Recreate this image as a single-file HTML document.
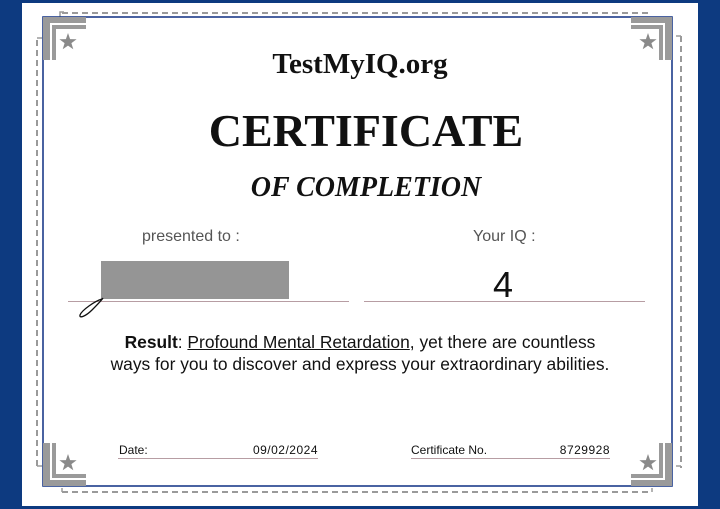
<!DOCTYPE html>
<html><head><meta charset="utf-8"><style>
*{margin:0;padding:0;box-sizing:border-box}
body{width:720px;height:509px;background:#0d3a80;position:relative;overflow:hidden;font-family:"Liberation Sans",sans-serif}
.paper{position:absolute;left:22px;top:3px;width:676px;height:503px;background:#fff}
.a{position:absolute}
.t{position:absolute;white-space:nowrap}
</style></head><body>
<div class="paper"></div>
<svg class="a" style="left:0;top:0" width="720" height="509">
 <g stroke="#9a9a9a" stroke-width="2" stroke-dasharray="6,4" fill="none">
  <line x1="62" y1="13" x2="652" y2="13"/>
  <line x1="62" y1="492" x2="650" y2="492"/>
  <line x1="37" y1="40" x2="37" y2="468"/>
  <line x1="681" y1="36" x2="681" y2="468"/>
 </g>
 <g stroke="#9a9a9a" stroke-width="1.5" fill="none">
  <path d="M60 17 V12 H64"/><path d="M37 38 H42"/><path d="M681 36 H676"/><path d="M37 466 H42"/><path d="M62 492 V488"/><path d="M652 492 V488"/><path d="M681 466 H676"/>
 </g>
 <rect x="43" y="17" width="629" height="469" fill="none" stroke="#1d3c8a" stroke-width="1.6"/>
 <g fill="#9a9a9a">
  <path d="M43 17 H86 V23 H50 V60 H43 Z"/>
  <path d="M52 25 H86 V29 H56 V60 H52 Z"/>
  <path d="M672 17 H631 V23 H665 V60 H672 Z"/>
  <path d="M663 25 H631 V29 H659 V60 H663 Z"/>
  <path d="M43 486 H86 V480 H50 V443 H43 Z"/>
  <path d="M52 478 H86 V474 H56 V443 H52 Z"/>
  <path d="M672 486 H631 V480 H665 V443 H672 Z"/>
  <path d="M663 478 H631 V474 H659 V443 H663 Z"/>
 </g>
 <g fill="#8a8a8a">
  <polygon transform="translate(68,42)" points="0,-9 2.1,-2.9 8.6,-2.8 3.4,1.1 5.3,7.3 0,3.6 -5.3,7.3 -3.4,1.1 -8.6,-2.8 -2.1,-2.9"/>
  <polygon transform="translate(648,42)" points="0,-9 2.1,-2.9 8.6,-2.8 3.4,1.1 5.3,7.3 0,3.6 -5.3,7.3 -3.4,1.1 -8.6,-2.8 -2.1,-2.9"/>
  <polygon transform="translate(68,463)" points="0,-9 2.1,-2.9 8.6,-2.8 3.4,1.1 5.3,7.3 0,3.6 -5.3,7.3 -3.4,1.1 -8.6,-2.8 -2.1,-2.9"/>
  <polygon transform="translate(648,463)" points="0,-9 2.1,-2.9 8.6,-2.8 3.4,1.1 5.3,7.3 0,3.6 -5.3,7.3 -3.4,1.1 -8.6,-2.8 -2.1,-2.9"/>
 </g>
 <line x1="68" y1="301.5" x2="349" y2="301.5" stroke="#b79da3" stroke-width="1"/>
 <line x1="364" y1="301.5" x2="645" y2="301.5" stroke="#b79da3" stroke-width="1"/>
 <line x1="118" y1="458.5" x2="318" y2="458.5" stroke="#b79da3" stroke-width="1"/>
 <line x1="411" y1="458.5" x2="610" y2="458.5" stroke="#b79da3" stroke-width="1"/>
 <rect x="101" y="261" width="188" height="38" fill="#959595"/>
 <path d="M102 299 C95 301 82 310 80 315 C79 319 86 316 92 310 C97 305 101 301 103 298" fill="none" stroke="#111" stroke-width="1.3"/>
</svg>
<div class="t" style="left:0;width:720px;text-align:center;top:48px;font-family:'Liberation Serif',serif;font-weight:bold;font-size:29px;color:#111">TestMyIQ.org</div>
<div class="t" style="left:6px;width:720px;text-align:center;top:104px;font-family:'Liberation Serif',serif;font-weight:bold;font-size:46px;color:#111">CERTIFICATE</div>
<div class="t" style="left:6px;width:720px;text-align:center;top:172px;font-family:'Liberation Serif',serif;font-style:italic;font-weight:bold;font-size:28px;color:#111">OF COMPLETION</div>
<div class="t" style="left:142px;top:228px;font-size:16px;color:#555">presented to :</div>
<div class="t" style="left:473px;top:228px;font-size:16px;color:#555">Your IQ :</div>
<div class="t" style="left:493px;top:264px;font-size:36px;color:#111">4</div>
<div class="t" style="left:0;width:720px;text-align:center;top:331px;font-size:17.4px;color:#111;line-height:22px"><b>Result</b>: <u>Profound Mental Retardation</u>, yet there are countless<br>ways for you to discover and express your extraordinary abilities.</div>
<div class="t" style="left:119px;top:443px;font-size:12px;color:#111">Date:</div>
<div class="t" style="left:218px;width:100px;text-align:right;top:443px;font-size:12px;color:#111;letter-spacing:0.5px">09/02/2024</div>
<div class="t" style="left:411px;top:443px;font-size:12px;color:#111">Certificate No.</div>
<div class="t" style="left:510px;width:100px;text-align:right;top:443px;font-size:12px;color:#111;letter-spacing:0.5px">8729928</div>
</body></html>
